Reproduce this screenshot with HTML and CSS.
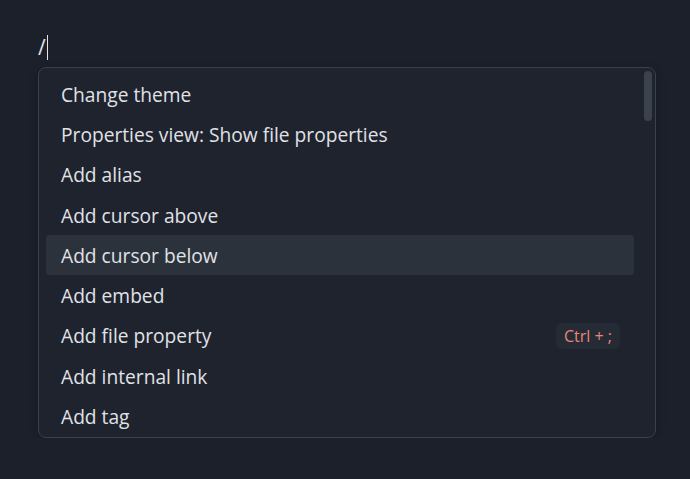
FILE: index.html
```html
<!DOCTYPE html>
<html lang="en">

<head>
    <meta charset="utf-8">
    <title>Command suggest</title>
    <link rel="stylesheet" href="styles.css">
</head>

<body>

    <div class="editor">
        <div class="line"><span class="slash">/</span><span class="caret"></span></div>

        <div class="suggest">
            <div class="list">
                <div class="item">Change theme</div>
                <div class="item">Properties view: Show file properties</div>
                <div class="item">Add alias</div>
                <div class="item">Add cursor above</div>
                <div class="item active">Add cursor below</div>
                <div class="item">Add embed</div>
                <div class="item">Add file property <span class="hotkey">Ctrl + ;</span></div>
                <div class="item">Add internal link</div>
                <div class="item">Add tag</div>
            </div>
            <div class="scrollbar"></div>
        </div>
    </div>

</body>

</html>
```

FILE: styles.css
```css
html {
    background-color: #1b202a;
}

body {
    margin: 0;
    font-family: "Open Sans", "Noto Sans", sans-serif;
    color: #e0e2e6;
}

.editor {
    padding: 35px 0 0 38px;
}

.line {
    display: flex;
    align-items: flex-start;
    height: 25px;
}

.slash {
    font-size: 21px;
    line-height: 24px;
    color: #e2e4e8;
}

.caret {
    width: 1.5px;
    height: 25px;
    margin-left: 1px;
    background-color: #e6e6e6;
}

.suggest {
    position: relative;
    width: 618px;
    height: 371px;
    margin-top: 7px;
    padding: 6px 21px 0 7px;
    box-sizing: border-box;
    border: 1px solid #3b414b;
    border-radius: 8px;
    background-color: #1e232e;
    overflow: hidden;
    box-shadow: 0 2px 10px rgba(0, 0, 0, 0.25);
}

.item {
    display: flex;
    align-items: center;
    justify-content: space-between;
    height: 40.3px;
    padding: 0 14px 0 15px;
    font-size: 19.2px;
    border-radius: 4px;
}

.item.active {
    background-color: #2c323c;
}

.hotkey {
    font-size: 16px;
    line-height: 22px;
    color: #e8857b;
    background-color: #252b35;
    padding: 2px 8px;
    border-radius: 5px;
}

.scrollbar {
    position: absolute;
    top: 3px;
    right: 3px;
    width: 8px;
    height: 50px;
    border-radius: 4px;
    background-color: #3b424c;
}
```
